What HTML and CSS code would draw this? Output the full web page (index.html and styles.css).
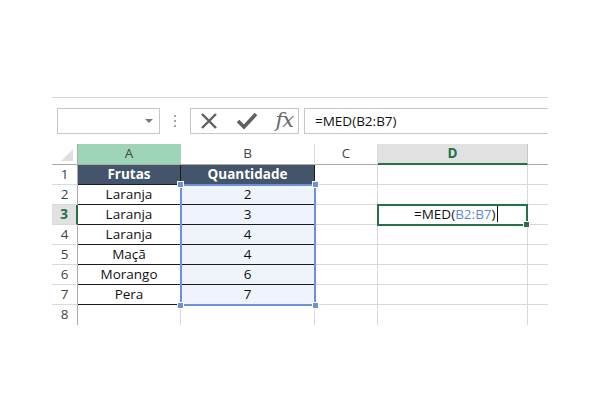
FILE: index.html
```html
<!DOCTYPE html>
<html lang="pt">
<head>
    <meta charset="UTF-8">
    <title>MED</title>
    <link rel="stylesheet" href="styles.css">
</head>
<body>
    <div class="excel">
        <div class="formula-bar">
            <div class="namebox"><span class="caret"></span></div>
            <div class="grip"><span></span><span></span><span></span></div>
            <div class="fbuttons">
                <svg class="ico" width="20" height="20" viewBox="0 0 20 20">
                    <path d="M3 3 L17 17 M17 3 L3 17" stroke="#5f5f5f" stroke-width="2.4" fill="none"/>
                </svg>
                <svg class="ico" width="22" height="20" viewBox="0 0 22 20">
                    <path d="M2 10 L8 16 L20 3" stroke="#5f5f5f" stroke-width="3.6" fill="none" stroke-linejoin="miter"/>
                </svg>
                <span class="fx">fx</span>
            </div>
            <div class="finput">=MED(B2:B7)</div>
        </div>

        <div class="grid">
            <div class="corner"><span class="tri"></span></div>
            <div class="colhead hl-a">A</div>
            <div class="colhead">B</div>
            <div class="colhead">C</div>
            <div class="colhead hl-d">D</div>
            <div class="colhead blank"></div>

            <div class="rowhead">1</div>
            <div class="cell th">Frutas</div>
            <div class="cell th th-last">Quantidade</div>
            <div class="cell"></div><div class="cell"></div><div class="cell"></div>

            <div class="rowhead">2</div>
            <div class="cell td">Laranja</div>
            <div class="cell td sel">2</div>
            <div class="cell"></div><div class="cell"></div><div class="cell"></div>

            <div class="rowhead active">3</div>
            <div class="cell td">Laranja</div>
            <div class="cell td sel">3</div>
            <div class="cell"></div>
            <div class="cell current">=MED(<span class="ref">B2:B7</span>)<span class="cursor"></span></div>
            <div class="cell"></div>

            <div class="rowhead">4</div>
            <div class="cell td">Laranja</div>
            <div class="cell td sel">4</div>
            <div class="cell"></div><div class="cell"></div><div class="cell"></div>

            <div class="rowhead">5</div>
            <div class="cell td">Maçã</div>
            <div class="cell td sel">4</div>
            <div class="cell"></div><div class="cell"></div><div class="cell"></div>

            <div class="rowhead">6</div>
            <div class="cell td">Morango</div>
            <div class="cell td sel">6</div>
            <div class="cell"></div><div class="cell"></div><div class="cell"></div>

            <div class="rowhead">7</div>
            <div class="cell td">Pera</div>
            <div class="cell td sel">7</div>
            <div class="cell"></div><div class="cell"></div><div class="cell"></div>

            <div class="rowhead last">8</div>
            <div class="cell last"></div><div class="cell last"></div><div class="cell last"></div><div class="cell last"></div><div class="cell last"></div>

            <div class="range">
                <i class="h tl"></i><i class="h tr"></i><i class="h bl"></i><i class="h br"></i>
            </div>
        </div>
    </div>
</body>
</html>
```

FILE: styles.css
```css
body {
    margin: 0;
    background: #fff;
    font-family: "Open Sans", "Liberation Sans", sans-serif;
}

.excel {
    width: 496px;
    margin: 97px 0 0 52px;
    border-top: 1px solid #d9d9d9;
}

/* formula bar */
.formula-bar {
    display: flex;
    height: 26px;
    margin-top: 10px;
}

.namebox {
    position: relative;
    width: 103px;
    margin-left: 5px;
    box-sizing: border-box;
    border: 1px solid #c6c6c6;
}

.caret {
    position: absolute;
    right: 6px;
    top: 10px;
    border-left: 4px solid transparent;
    border-right: 4px solid transparent;
    border-top: 4px solid #777;
}

.grip {
    width: 30px;
    display: flex;
    flex-direction: column;
    align-items: center;
    justify-content: center;
    gap: 3px;
}

.grip span {
    width: 2px;
    height: 2px;
    background: #a6a6a6;
}

.fbuttons {
    width: 109px;
    box-sizing: border-box;
    border: 1px solid #c6c6c6;
    display: flex;
    align-items: center;
    justify-content: space-between;
    padding: 0 5px 0 8px;
}

.fx {
    font-family: "DejaVu Serif", serif;
    font-style: italic;
    font-size: 21px;
    letter-spacing: -1px;
    color: #6b6b6b;
    line-height: 20px;
    margin-top: -3px;
}

.finput {
    flex: 1;
    margin-left: 5px;
    box-sizing: border-box;
    border: 1px solid #c6c6c6;
    border-right: none;
    padding-left: 10px;
    font-size: 13.5px;
    line-height: 24px;
    color: #111;
}

/* sheet grid */
.grid {
    position: relative;
    display: grid;
    grid-template-columns: 26px 103px 134px 63px 150px 20px;
    grid-template-rows: 21px;
    grid-auto-rows: 20px;
    margin-top: 10px;
    font-size: 13.5px;
}

.grid > div {
    box-sizing: border-box;
    border-right: 1px solid #d9d9d9;
    border-bottom: 1px solid #d9d9d9;
    text-align: center;
    line-height: 19px;
}

.corner {
    position: relative;
    border-bottom-color: #ababab !important;
    border-right-color: #ababab !important;
}

.tri {
    position: absolute;
    right: 4px;
    bottom: 3px;
    border-left: 12px solid transparent;
    border-bottom: 12px solid #dfdfdf;
}

.grid > .colhead {
    color: #444;
    border-bottom-color: #ababab;
}

.colhead.blank {
    border-right: none;
}

.grid > .hl-a {
    background: #9fd5b7;
    border-right-color: #9fd5b7;
}

.grid > .hl-d {
    background: #e1e1e1;
    color: #217346;
    font-weight: bold;
    border-bottom: 2px solid #217346;
    border-right-color: #c6c6c6;
    line-height: 19px;
}

.grid > .rowhead {
    color: #444;
    border-right-color: #ababab;
    border-bottom-color: #d9d9d9;
}

.grid > .rowhead.active {
    color: #217346;
    font-weight: bold;
    background: #e1e1e1;
    border-right: 2px solid #217346;
}

.grid > .cell:nth-child(6n) {
    border-right: none;
}

.grid > .last {
    border-bottom: none;
}

.grid > .th {
    background: #44546a;
    color: #fff;
    font-weight: bold;
    border-right-color: #1b1b1b;
    border-bottom-color: #1b1b1b;
}

.grid > .td {
    border-bottom-color: #1b1b1b;
    color: #111;
}

.grid > .sel {
    background: #eef3fc;
}

.grid > .current {
    position: relative;
    text-align: left;
    padding-left: 36px;
    color: #111;
}

.current::after {
    content: "";
    position: absolute;
    left: -1px;
    top: -1px;
    right: -1px;
    bottom: -2px;
    border: 2px solid #217346;
}

.current .ref {
    color: #5b8bd8;
}

.cursor {
    display: inline-block;
    width: 1px;
    height: 16px;
    background: #111;
    vertical-align: -3px;
    margin-left: 1px;
}

/* fill handle on active cell */
.current::before {
    content: "";
    position: absolute;
    right: -3px;
    bottom: -4px;
    width: 5px;
    height: 5px;
    background: #217346;
    border: 1px solid #fff;
    z-index: 2;
}

/* B2:B7 range highlight */
.range {
    position: absolute;
    left: 128px;
    top: 40px;
    width: 136px;
    height: 122px;
    box-sizing: border-box;
    border: 2px solid #6d8fdc !important;
    pointer-events: none;
}

.range .h {
    position: absolute;
    width: 5px;
    height: 5px;
    background: #6d8fdc;
    border: 1px solid #fff;
}

.h.tl { left: -5px; top: -5px; }
.h.tr { right: -5px; top: -5px; }
.h.bl { left: -5px; bottom: -5px; }
.h.br { right: -5px; bottom: -5px; }
```
